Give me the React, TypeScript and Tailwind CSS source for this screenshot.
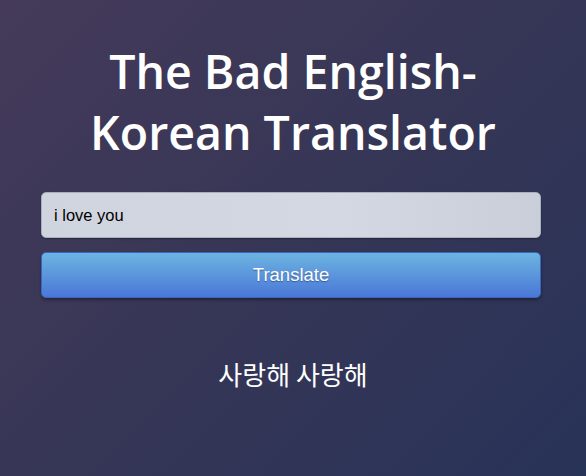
import { useState } from 'react';

export default function App() {
  const [text, setText] = useState('i love you');

  return (
    <div className="min-h-[476px] w-full bg-[linear-gradient(135deg,#453a5a_0%,#363656_50%,#283358_100%)] pt-[41px]">
      {/* Title */}
      <h1 className="text-center text-[46.5px] leading-[61px] font-semibold text-white [font-family:'Open_Sans',sans-serif]">
        The Bad English-
        <br />
        Korean Translator
      </h1>

      {/* Form */}
      <div className="mt-[29px] pl-[41px] pr-[45px] flex flex-col gap-[14px]">
        <input
          autoFocus
          value={text}
          onChange={(e) => setText(e.target.value)}
          className="h-[46px] w-full rounded-[5px] border border-[#a9afbd] bg-[linear-gradient(90deg,#cfd4de,#d3d8e2_60%,#c9ced8)] px-[12px] text-[16.5px] text-black caret-black outline-none shadow-[0_1px_2px_rgba(0,0,0,0.3)] [font-family:'Liberation_Sans',Arial,sans-serif]"
        />
        <button className="h-[46px] w-full rounded-[5px] border border-[#3c64c4] bg-[linear-gradient(180deg,#6cb4e0,#4a77d8)] text-[18.5px] text-white [text-shadow:0_1px_1px_rgba(0,0,0,0.35)] shadow-[0_2px_3px_rgba(0,0,0,0.35)] [font-family:'Liberation_Sans',Arial,sans-serif]">
          Translate
        </button>
      </div>

      {/* Result */}
      <p className="mt-[58px] text-center text-[26px] leading-[36px] text-white [font-family:'Noto_Sans_CJK_KR',sans-serif]">
        사랑해 사랑해
      </p>
    </div>
  );
}
